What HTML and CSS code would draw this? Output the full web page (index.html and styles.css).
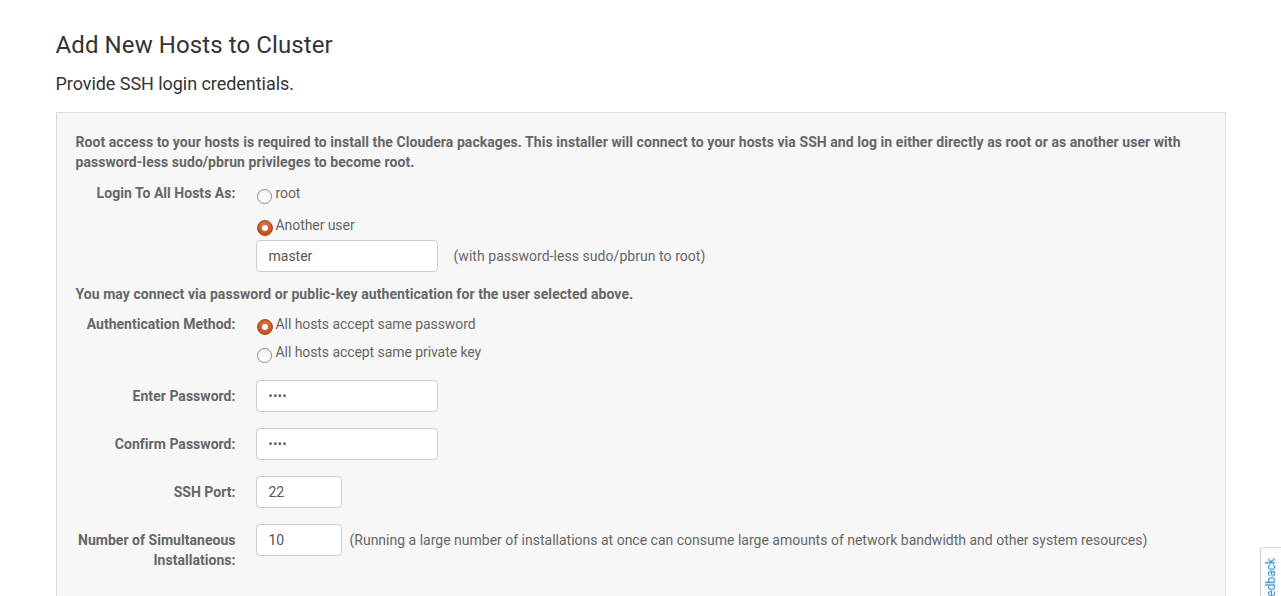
FILE: index.html
```html
<!DOCTYPE html>
<html>
<head>
<meta charset="utf-8">
<link rel="stylesheet" href="styles.css">
</head>
<body>
<div class="container">
  <h1 class="title">Add New Hosts to Cluster</h1>
  <p class="subtitle">Provide SSH login credentials.</p>
  <div class="panel">
    <p class="note">Root access to your hosts is required to install the Cloudera packages. This installer will connect to your hosts via SSH and log in either directly as root or as another user with password-less sudo/pbrun privileges to become root.</p>

    <div class="row row-login">
      <div class="label">Login To All Hosts As:</div>
      <div class="controls">
        <label class="radio"><span class="dot"></span>root</label>
        <label class="radio radio-2"><span class="dot checked"></span>Another user</label>
        <div class="inline-field">
          <span class="input wide">master</span>
          <span class="help">(with password-less sudo/pbrun to root)</span>
        </div>
      </div>
    </div>

    <p class="note note-2">You may connect via password or public-key authentication for the user selected above.</p>

    <div class="row row-auth">
      <div class="label">Authentication Method:</div>
      <div class="controls">
        <label class="radio"><span class="dot checked"></span>All hosts accept same password</label>
        <label class="radio radio-3"><span class="dot"></span>All hosts accept same private key</label>
      </div>
    </div>

    <div class="row row-field row-pw">
      <div class="label label-field">Enter Password:</div>
      <div class="controls"><span class="input wide pw">••••</span></div>
    </div>

    <div class="row row-field">
      <div class="label label-field">Confirm Password:</div>
      <div class="controls"><span class="input wide pw">••••</span></div>
    </div>

    <div class="row row-field">
      <div class="label label-field">SSH Port:</div>
      <div class="controls"><span class="input narrow">22</span></div>
    </div>

    <div class="row row-field">
      <div class="label label-field">Number of Simultaneous Installations:</div>
      <div class="controls inline-field">
        <span class="input narrow">10</span>
        <span class="help help-2">(Running a large number of installations at once can consume large amounts of network bandwidth and other system resources)</span>
      </div>
    </div>
  </div>
</div>
<div class="feedback">Feedback</div>
</body>
</html>
```

FILE: styles.css
```css
html, body {
  margin: 0;
  padding: 0;
  background: #ffffff;
  font-family: Roboto, "Liberation Sans", sans-serif;
  font-size: 14px;
  line-height: 20px;
  color: #666666;
  overflow: hidden;
}

.container {
  width: 1170px;
  margin: 0 auto;
}

.title {
  margin: 0;
  padding-top: 31px;
  font-size: 24px;
  line-height: 28px;
  font-weight: 400;
  color: #333333;
  letter-spacing: 0.1px;
}

.subtitle {
  margin: 13px 0 0 0;
  font-size: 18px;
  line-height: 24px;
  color: #333333;
  letter-spacing: -0.05px;
}

.panel {
  margin-top: 16px;
  background: #f7f7f7;
  border: 1px solid #dddddd;
  padding: 19px 19px 60px 19px;
  height: 600px;
}

.note {
  margin: 0;
  font-weight: 700;
  color: #666666;
  letter-spacing: 0.06px;
}

.note-2 {
  margin-top: 12px;
}

.row {
  display: grid;
  grid-template-columns: 160px 1fr;
  column-gap: 20px;
}

.row-login {
  margin-top: 11px;
}

.row-auth {
  margin-top: 10px;
}

.row-pw {
  margin-top: 18px;
}

.row-field + .row-field {
  margin-top: 16px;
}

.label {
  text-align: right;
  font-weight: 700;
  color: #666666;
  letter-spacing: 0.03px;
}

.label-field {
  padding-top: 6px;
}

.controls {
  display: flex;
  flex-direction: column;
  align-items: flex-start;
}

.radio {
  display: flex;
  align-items: flex-start;
  height: 20px;
  color: #666666;
  letter-spacing: -0.07px;
}

.radio-2 {
  margin-top: 12px;
}

.radio-3 {
  margin-top: 8px;
}

.dot {
  box-sizing: border-box;
  flex: none;
  width: 15px;
  height: 15px;
  margin: 6px 4px 0 1px;
  border-radius: 50%;
  border: 1px solid #8c8c8c;
  background: linear-gradient(#f0f0f0, #ffffff);
  position: relative;
}

.dot.checked {
  width: 16px;
  height: 16px;
  margin: 5px 3px 0 1px;
  border: 1px solid #a3461c;
  background: radial-gradient(circle at 50% 35%, #e07a47, #c4521f 70%);
}

.dot.checked::after {
  content: "";
  position: absolute;
  left: 4px;
  top: 4px;
  width: 6px;
  height: 6px;
  border-radius: 50%;
  background: #ffffff;
}

.inline-field {
  display: flex;
  flex-direction: row;
  align-items: center;
  margin-top: 5px;
}

.controls.inline-field {
  margin-top: 0;
  align-items: flex-start;
}

.input {
  box-sizing: border-box;
  display: block;
  height: 32px;
  padding: 5px 12px;
  line-height: 20px;
  border: 1px solid #cccccc;
  border-radius: 4px;
  background: #ffffff;
  color: #555555;
}

.input.wide {
  width: 182px;
}

.input.narrow {
  width: 86px;
}

.input.pw {
  font-size: 12px;
  letter-spacing: 0.6px;
}

.help {
  margin-left: 16px;
  color: #666666;
  letter-spacing: 0.05px;
}

.help-2 {
  margin-left: 8px;
  line-height: 32px;
  letter-spacing: 0;
}

.feedback {
  position: fixed;
  left: 1260px;
  top: 547px;
  width: 22px;
  box-sizing: border-box;
  padding: 10px 0;
  border: 1px solid #cccccc;
  border-left: none;
  border-radius: 0 0 4px 0;
  background: #ffffff;
  color: #2a86c8;
  font-size: 12px;
  line-height: 20px;
  writing-mode: vertical-rl;
  transform: rotate(180deg);
  transform-origin: center;
  text-align: center;
}
```
